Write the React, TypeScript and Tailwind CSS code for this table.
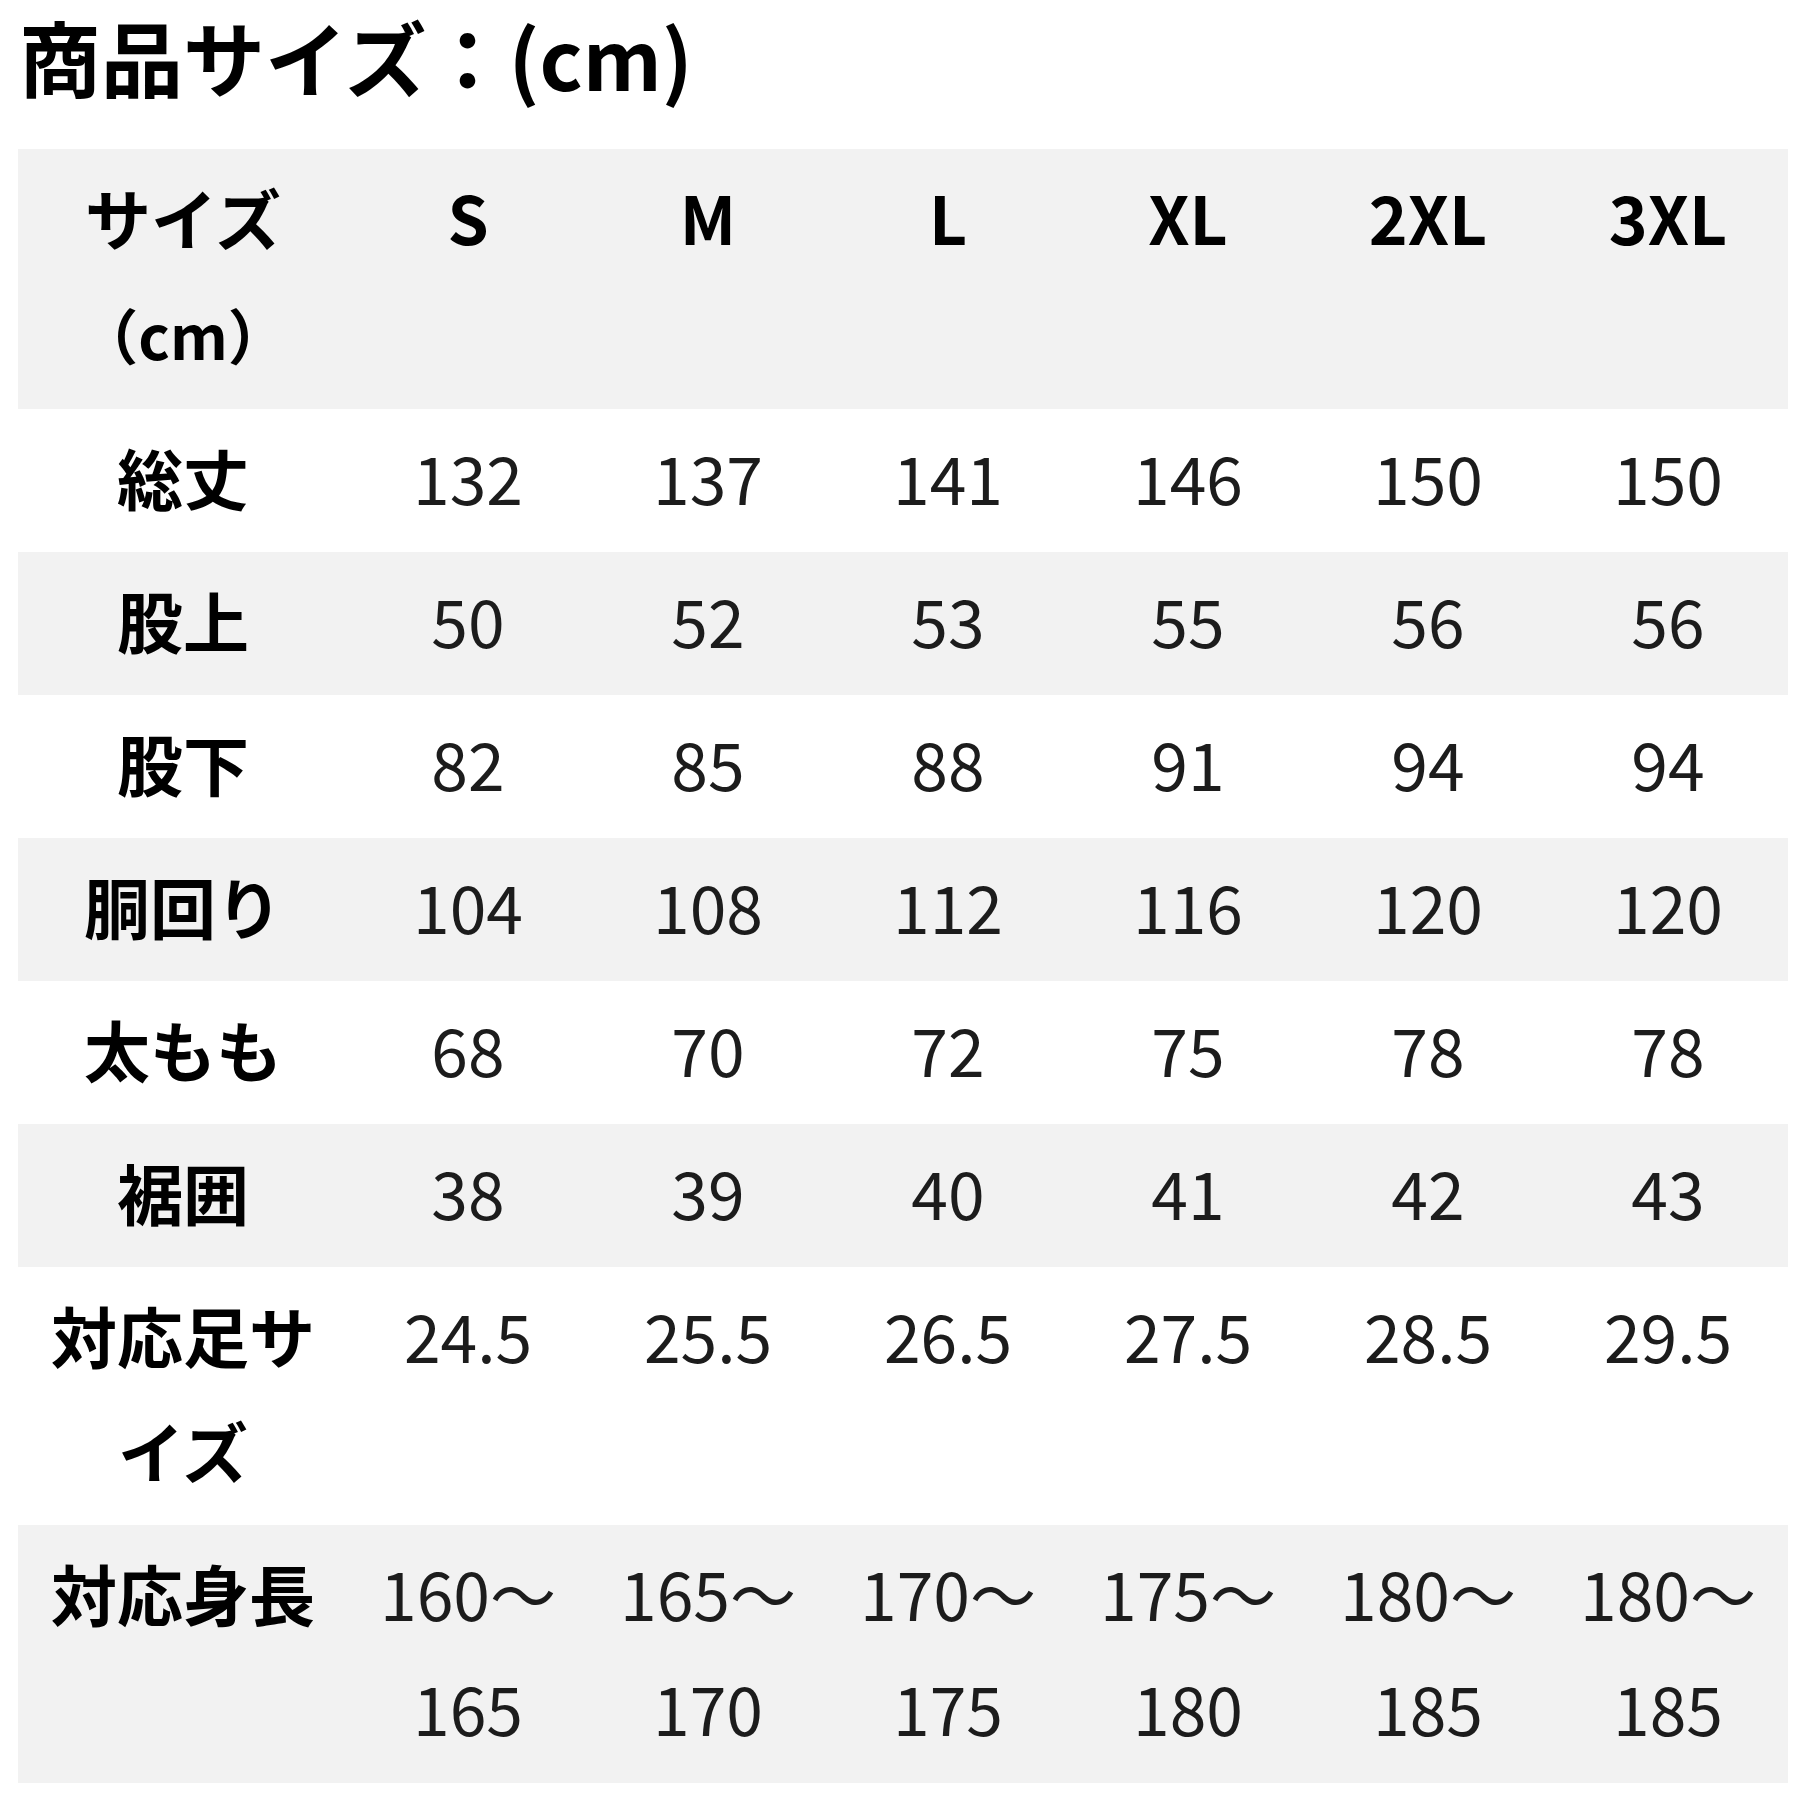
const sizes = ["S", "M", "L", "XL", "2XL", "3XL"];

const rows: { label: React.ReactNode; values: React.ReactNode[]; grey: boolean }[] = [
  { label: "総丈", values: ["132", "137", "141", "146", "150", "150"], grey: false },
  { label: "股上", values: ["50", "52", "53", "55", "56", "56"], grey: true },
  { label: "股下", values: ["82", "85", "88", "91", "94", "94"], grey: false },
  { label: "胴回り", values: ["104", "108", "112", "116", "120", "120"], grey: true },
  { label: "太もも", values: ["68", "70", "72", "75", "78", "78"], grey: false },
  { label: "裾囲", values: ["38", "39", "40", "41", "42", "43"], grey: true },
  {
    label: (
      <>
        対応足サ
        <br />
        イズ
      </>
    ),
    values: ["24.5", "25.5", "26.5", "27.5", "28.5", "29.5"],
    grey: false,
  },
  {
    label: "対応身長",
    values: [
      ["160～", "165"],
      ["165～", "170"],
      ["170～", "175"],
      ["175～", "180"],
      ["180～", "185"],
      ["180～", "185"],
    ].map(([a, b]) => (
      <>
        {a}
        <br />
        {b}
      </>
    )),
    grey: true,
  },
];

export default function App() {
  return (
    <div className="w-[1800px] h-[1800px] bg-white px-[18px] font-['Noto_Sans_CJK_JP',sans-serif] text-black">
      {/* タイトル */}
      <h1 className="pt-[5px] pl-[1px] text-[82px] leading-[102px] font-bold whitespace-nowrap">
        商品サイズ：(cm)
      </h1>

      {/* サイズ表 */}
      <table className="mt-[42px] w-[1770px] table-fixed border-collapse text-center text-[66px] leading-[115px]">
        <colgroup>
          <col className="w-[330px]" />
          {sizes.map((s) => (
            <col key={s} className="w-[240px]" />
          ))}
        </colgroup>
        <thead>
          <tr className="bg-[#f2f2f2] align-top">
            <th className="pt-[10px] pb-[18px] px-0 font-bold">
              サイズ
              <br />
              <span className="text-[60px]">（cm）</span>
            </th>
            {sizes.map((s) => (
              <th key={s} className="pt-[10px] pb-[18px] px-0 font-bold">
                {s}
              </th>
            ))}
          </tr>
        </thead>
        <tbody>
          {rows.map((row, i) => (
            <tr key={i} className={`${row.grey ? "bg-[#f2f2f2]" : "bg-white"} align-top`}>
              <td className="pt-[10px] pb-[18px] px-0 font-bold">{row.label}</td>
              {row.values.map((v, j) => (
                <td key={j} className="pt-[10px] pb-[18px] px-0 font-normal text-[#1c1c1c]">
                  {v}
                </td>
              ))}
            </tr>
          ))}
        </tbody>
      </table>
    </div>
  );
}
